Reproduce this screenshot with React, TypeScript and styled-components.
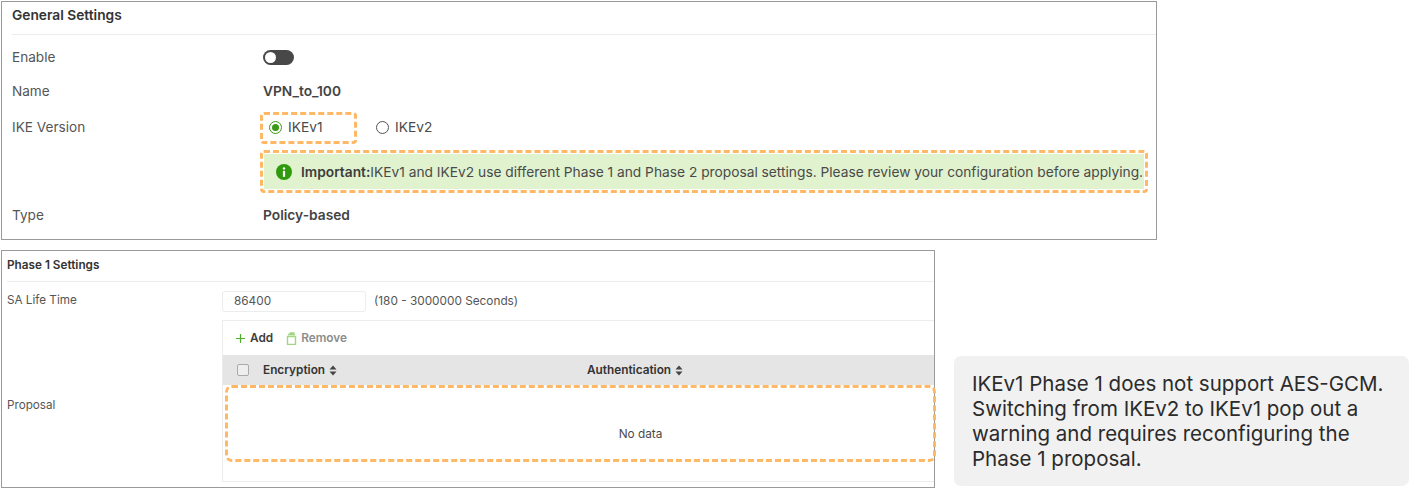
import React from "react";
import styled, { createGlobalStyle } from "styled-components";

const Global = createGlobalStyle`
  html, body { margin: 0; padding: 0; background: #fff; }
  body { font-family: Inter, "Liberation Sans", sans-serif; color: #4a4a4a; }
`;

const Page = styled.div`
  width: 1409px;
  height: 489px;
  overflow: hidden;
  padding: 1px 0 0 1px;
  box-sizing: border-box;
  display: flex;
  flex-direction: column;
  gap: 10px;
`;

const Panel = styled.section<{ $w: number; $h: number }>`
  width: ${(p) => p.$w}px;
  height: ${(p) => p.$h}px;
  box-sizing: border-box;
  border: 1px solid #9a9a9a;
  background: #fff;
  display: flex;
  flex-direction: column;
  flex: none;
`;

const GeneralTitle = styled.h2`
  margin: 0 0 0 10px;
  height: 33px;
  padding-bottom: 7px;
  box-sizing: border-box;
  display: flex;
  align-items: center;
  font-size: 13.75px;
  font-weight: 600;
  color: #333;
  border-bottom: 1px solid #ececec;
`;

const GeneralGrid = styled.div`
  display: grid;
  grid-template-columns: 251px 1fr;
  padding-left: 10px;
  align-items: center;
`;

const Label = styled.div`
  font-size: 13.6px;
  color: #555;
`;

const Value = styled.div<{ $h: number; $bold?: boolean }>`
  min-height: ${(p) => p.$h}px;
  display: flex;
  align-items: center;
  font-size: 13.75px;
  font-weight: ${(p) => (p.$bold ? 600 : 400)};
  color: #444;
`;

const LabelCell = styled(Label)<{ $h: number }>`
  height: ${(p) => p.$h}px;
  display: flex;
  align-items: center;
`;

const IkeLabel = styled(LabelCell)`
  padding-top: 1px;
  box-sizing: border-box;
`;

const IkeValue = styled(Value)`
  padding-top: 2px;
  box-sizing: border-box;
`;

const Toggle = styled.span`
  width: 31px;
  height: 15px;
  border-radius: 8px;
  background: #484848;
  position: relative;
  &::after {
    content: "";
    position: absolute;
    left: 2px;
    top: 2px;
    width: 11px;
    height: 11px;
    border-radius: 50%;
    background: #fff;
  }
`;

const Dashed = styled.div`
  border: 3px dashed #ffb866;
  border-radius: 4px;
  box-sizing: border-box;
`;

const RadioGroup = styled.div`
  display: flex;
  align-items: center;
`;

const RadioBox = styled(Dashed)`
  width: 97px;
  height: 32px;
  margin-left: -3px;
  padding: 0 0 1px 6px;
  display: flex;
  align-items: center;
`;

const RadioItem = styled.label`
  display: flex;
  align-items: center;
  gap: 6px;
  font-size: 13.75px;
  color: #4a4a4a;
`;

const PlainRadio = styled(RadioItem)`
  margin-left: 19px;
  margin-bottom: 1px;
`;

const RadioDot = styled.span<{ $on?: boolean }>`
  width: 13px;
  height: 13px;
  box-sizing: border-box;
  border-radius: 50%;
  border: 1.5px solid ${(p) => (p.$on ? "#3a9a14" : "#555")};
  display: flex;
  align-items: center;
  justify-content: center;
  &::after {
    content: "";
    display: ${(p) => (p.$on ? "block" : "none")};
    width: 7px;
    height: 7px;
    border-radius: 50%;
    background: #3a9a14;
  }
`;

const AlertBox = styled(Dashed)`
  width: 888px;
  height: 43px;
  margin-left: -3px;
  padding: 1px;
  display: flex;
`;

const Alert = styled.div`
  flex: 1;
  background: #e1f2ce;
  display: flex;
  align-items: center;
  padding-left: 12px;
  gap: 9px;
  font-size: 13.75px;
  color: #4a4a4a;
  white-space: nowrap;
  strong { font-weight: 600; color: #3d3d3d; }
`;

const PhaseTitle = styled.h2`
  margin: 0 0 0 5px;
  height: 31px;
  padding-bottom: 3px;
  box-sizing: border-box;
  display: flex;
  align-items: center;
  font-size: 11.75px;
  font-weight: 600;
  color: #333;
  border-bottom: 1px solid #ececec;
`;

const PhaseRow = styled.div`
  display: grid;
  grid-template-columns: 215px 1fr;
  padding-left: 5px;
`;

const SmallLabel = styled.div`
  font-size: 11.7px;
  color: #555;
  display: flex;
  align-items: center;
`;

const ProposalLabel = styled(SmallLabel)`
  padding-top: 8px;
`;

const LifeLabel = styled(SmallLabel)`
  height: 36px;
`;

const LifeValue = styled.div`
  height: 38px;
  display: flex;
  align-items: center;
  gap: 8px;
  font-size: 11.8px;
  color: #555;
`;

const NumberBox = styled.div`
  width: 144px;
  height: 21px;
  box-sizing: border-box;
  border: 1px solid #ececec;
  border-radius: 3px;
  padding-left: 11px;
  display: flex;
  align-items: center;
  font-size: 11.8px;
  color: #555;
`;

const ProposalTable = styled.div`
  position: relative;
  height: 162px;
  border-top: 1px solid #ececec;
  border-bottom: 1px solid #ececec;
  border-left: 1px solid #ececec;
  box-sizing: border-box;
  display: flex;
  flex-direction: column;
`;

const Toolbar = styled.div`
  height: 34px;
  display: flex;
  align-items: center;
  padding-left: 12px;
  font-size: 11.8px;
  font-weight: 600;
`;

const ToolButton = styled.span<{ $muted?: boolean }>`
  display: flex;
  align-items: center;
  gap: 4px;
  margin-right: 13px;
  color: ${(p) => (p.$muted ? "#8c8c8c" : "#3d3d3d")};
`;

const HeadRow = styled.div`
  height: 30px;
  background: #e5e5e5;
  display: grid;
  grid-template-columns: 40px 324px 1fr;
  align-items: center;
  font-size: 11.8px;
  font-weight: 600;
  color: #333;
`;

const Check = styled.span`
  width: 12px;
  height: 12px;
  margin-left: 14px;
  box-sizing: border-box;
  border: 1px solid #aaa;
  border-radius: 2px;
  background: #eee;
`;

const HeadCell = styled.span`
  display: flex;
  align-items: center;
  gap: 4px;
`;

const Empty = styled.div`
  flex: 1;
  display: flex;
  align-items: center;
  justify-content: center;
  font-size: 11.8px;
  color: #4a4a4a;
  padding: 2px 0 0 124px;
`;

const EmptyHighlight = styled(Dashed)`
  position: absolute;
  left: 2px;
  right: -2px;
  top: 64px;
  height: 77px;
  border-radius: 7px;
`;

const Bottom = styled.div`
  display: flex;
  align-items: flex-end;
  gap: 19px;
`;

const Note = styled.aside`
  width: 455px;
  height: 130px;
  margin-bottom: 2px;
  box-sizing: border-box;
  background: #f1f1f1;
  border-radius: 7px;
  padding: 0 0 0 18px;
  display: flex;
  align-items: center;
  font-size: 20.5px;
  line-height: 25px;
  color: #2b2b2b;
  white-space: nowrap;
`;

const Sort = () => (
  <svg width="8" height="11" viewBox="0 0 8 11" fill="#444">
    <path d="M4 0.5 7.5 4.5H0.5Z" />
    <path d="M4 10.5 7.5 6.5H0.5Z" />
  </svg>
);

export default function App() {
  return (
    <Page>
      <Global />
      <Panel $w={1156} $h={239}>
        <GeneralTitle>General Settings</GeneralTitle>
        <GeneralGrid>
          <LabelCell $h={44}>Enable</LabelCell>
          <Value $h={44}><Toggle /></Value>
          <LabelCell $h={24}>Name</LabelCell>
          <Value $h={24} $bold>VPN_to_100</Value>
          <IkeLabel $h={47}>IKE Version</IkeLabel>
          <IkeValue $h={47}>
            <RadioGroup>
              <RadioBox>
                <RadioItem><RadioDot $on />IKEv1</RadioItem>
              </RadioBox>
              <PlainRadio><RadioDot />IKEv2</PlainRadio>
            </RadioGroup>
          </IkeValue>
          <span />
          <Value $h={43}>
            <AlertBox>
              <Alert>
                <svg width="16" height="16" viewBox="0 0 16 16">
                  <circle cx="8" cy="8" r="8" fill="#2f9a0c" />
                  <rect x="6.8" y="3.2" width="2.4" height="2.4" rx="1.2" fill="#fff" />
                  <rect x="6.9" y="6.8" width="2.2" height="6" fill="#fff" />
                </svg>
                <span><strong>Important:</strong>IKEv1 and IKEv2 use different Phase 1 and Phase 2 proposal settings. Please review your configuration before applying.</span>
              </Alert>
            </AlertBox>
          </Value>
          <LabelCell $h={44}>Type</LabelCell>
          <Value $h={44} $bold>Policy-based</Value>
        </GeneralGrid>
      </Panel>
      <Bottom>
        <Panel $w={934} $h={238}>
          <PhaseTitle>Phase 1 Settings</PhaseTitle>
          <PhaseRow>
            <LifeLabel>SA Life Time</LifeLabel>
            <LifeValue>
              <NumberBox>86400</NumberBox>
              (180 - 3000000 Seconds)
            </LifeValue>
            <ProposalLabel>Proposal</ProposalLabel>
            <ProposalTable>
              <Toolbar>
                <ToolButton>
                  <svg width="11" height="11" viewBox="0 0 11 11" stroke="#4fae2a" strokeWidth="1.2" fill="none">
                    <path d="M5.5 1v9M1 5.5h9" />
                  </svg>
                  Add
                </ToolButton>
                <ToolButton $muted>
                  <svg width="11" height="13" viewBox="0 0 11 13" stroke="#a0d686" strokeWidth="1.4" fill="none">
                    <path d="M1.5 4.5h8v8h-8zM2 2.5h7M3.5 1h5" />
                  </svg>
                  Remove
                </ToolButton>
              </Toolbar>
              <HeadRow>
                <Check />
                <HeadCell>Encryption <Sort /></HeadCell>
                <HeadCell>Authentication <Sort /></HeadCell>
              </HeadRow>
              <Empty>No data</Empty>
              <EmptyHighlight />
            </ProposalTable>
          </PhaseRow>
        </Panel>
        <Note>
          <div>
            IKEv1 Phase 1 does not support AES-GCM.<br />
            Switching from IKEv2 to IKEv1 pop out a<br />
            warning and requires reconfiguring the<br />
            Phase 1 proposal.
          </div>
        </Note>
      </Bottom>
    </Page>
  );
}
